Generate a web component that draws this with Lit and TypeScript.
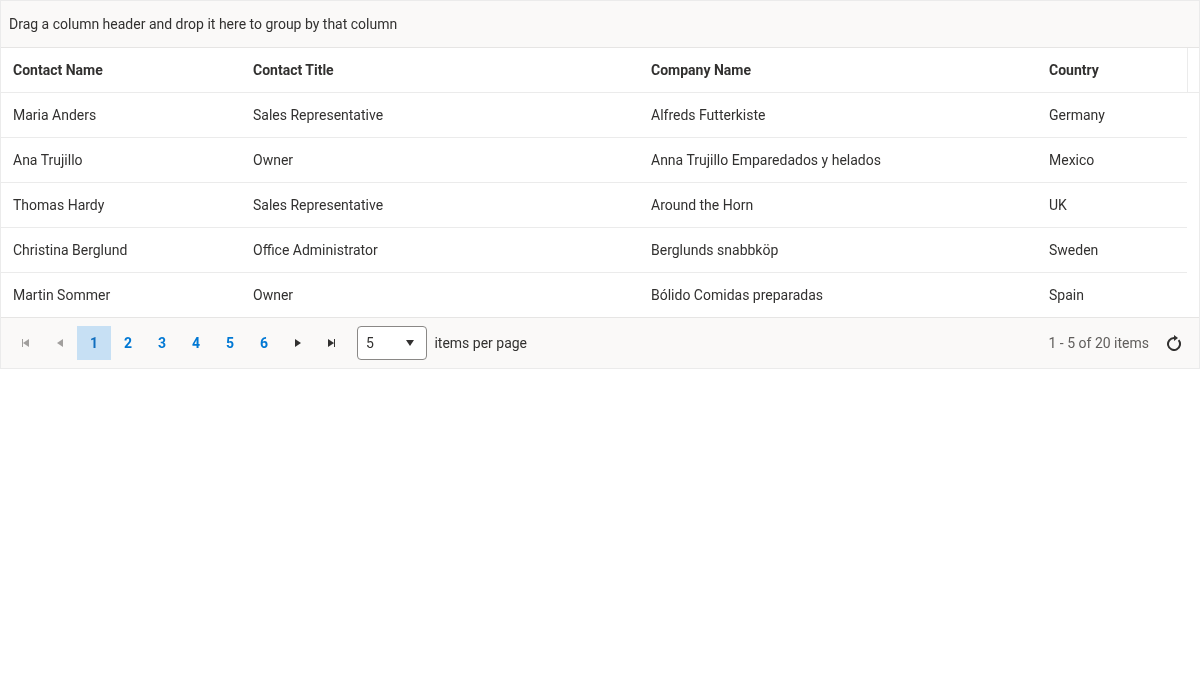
import { LitElement, html, css, svg } from "lit";
import { customElement, state } from "lit/decorators.js";
import { classMap } from "lit/directives/class-map.js";

const COLUMNS = ["Contact Name", "Contact Title", "Company Name", "Country"];
const ROWS = [
  ["Maria Anders", "Sales Representative", "Alfreds Futterkiste", "Germany"],
  ["Ana Trujillo", "Owner", "Anna Trujillo Emparedados y helados", "Mexico"],
  ["Thomas Hardy", "Sales Representative", "Around the Horn", "UK"],
  ["Christina Berglund", "Office Administrator", "Berglunds snabbköp", "Sweden"],
  ["Martin Sommer", "Owner", "Bólido Comidas preparadas", "Spain"],
];

const icon = (body: unknown) => html`<svg width="16" height="16" viewBox="0 0 16 16" fill="currentColor">${body}</svg>`;
const firstIcon = svg`<path d="M4 4h1v8H4zM11 4v8L5 8z"/>`;
const prevIcon = svg`<path d="M11 4v8L5 8z"/>`;
const nextIcon = svg`<path d="M5 4v8l6-4z"/>`;
const lastIcon = svg`<path d="M4 4v8l6-4zM10 4h1v8h-1z"/>`;
const downIcon = svg`<path d="M4 5h8l-4 6z"/>`;
const reloadIcon = svg`<path d="M12.6 5.14A6 6 0 1 1 8 3h1" fill="none" stroke="currentColor" stroke-width="2"/><path d="M8 0l4 3-4 3z"/>`;

@customElement("app-root")
export class AppRoot extends LitElement {
  @state() private page = 1;

  static styles = css`
    :host {
      display: block;
      box-sizing: border-box;
      border: 1px solid #ebebeb;
      font: 14px/20px Roboto, sans-serif;
      color: #323130;
      background: #fff;
      will-change: transform;
    }
    .group {
      padding: 13px 8px;
      background: #faf9f8;
      border-bottom: 1px solid #e6e5e4;
    }
    .head {
      border-bottom: 1px solid #ebebeb;
      padding-right: 11px;
    }
    .head .row {
      font-weight: 700;
      border-right: 1px solid #ebebeb;
    }
    .body {
      padding-right: 12px;
    }
    .row {
      display: grid;
      grid-template-columns: 240px 398px 398px 1fr;
    }
    .body .row + .row {
      border-top: 1px solid #ebebeb;
    }
    .cell {
      padding: 12px;
      white-space: nowrap;
    }
    .pager {
      display: flex;
      align-items: center;
      padding: 8px;
      border-top: 1px solid #e6e5e4;
      background: #faf9f8;
    }
    .btn {
      display: flex;
      align-items: center;
      justify-content: center;
      width: 34px;
      height: 34px;
      padding: 0;
      border: 0;
      background: none;
      font: inherit;
      color: inherit;
    }
    .num {
      font-weight: 700;
      color: #0078d4;
    }
    .current {
      background: #c7e0f4;
      color: #106ebe;
    }
    .off {
      color: #a19f9d;
    }
    .size {
      display: flex;
      align-items: center;
      justify-content: space-between;
      box-sizing: border-box;
      width: 70px;
      height: 34px;
      margin: 0 7.4px 0 8px;
      padding: 0 8px;
      border: 1px solid #8a8886;
      border-radius: 4px;
      background: #fff;
    }
    .info {
      margin-left: auto;
      margin-right: 8px;
      color: #605e5c;
    }
    svg {
      display: block;
    }
  `;

  private row(cells: string[]) {
    return html`<div class="row">${cells.map((c) => html`<div class="cell">${c}</div>`)}</div>`;
  }

  render() {
    return html`
      <div class="group">Drag a column header and drop it here to group by that column</div>
      <div class="head">${this.row(COLUMNS)}</div>
      <div class="body">${ROWS.map((r) => this.row(r))}</div>
      <div class="pager">
        <button class="btn off">${icon(firstIcon)}</button>
        <button class="btn off">${icon(prevIcon)}</button>
        ${[1, 2, 3, 4, 5, 6].map(
          (n) => html`<button
            class=${classMap({ btn: true, num: true, current: n === this.page })}
            @click=${() => (this.page = n)}
          >${n}</button>`
        )}
        <button class="btn">${icon(nextIcon)}</button>
        <button class="btn">${icon(lastIcon)}</button>
        <div class="size"><span>5</span>${icon(downIcon)}</div>
        <span>items per page</span>
        <span class="info">1 - 5 of 20 items</span>
        <button class="btn">${icon(reloadIcon)}</button>
      </div>
    `;
  }
}
